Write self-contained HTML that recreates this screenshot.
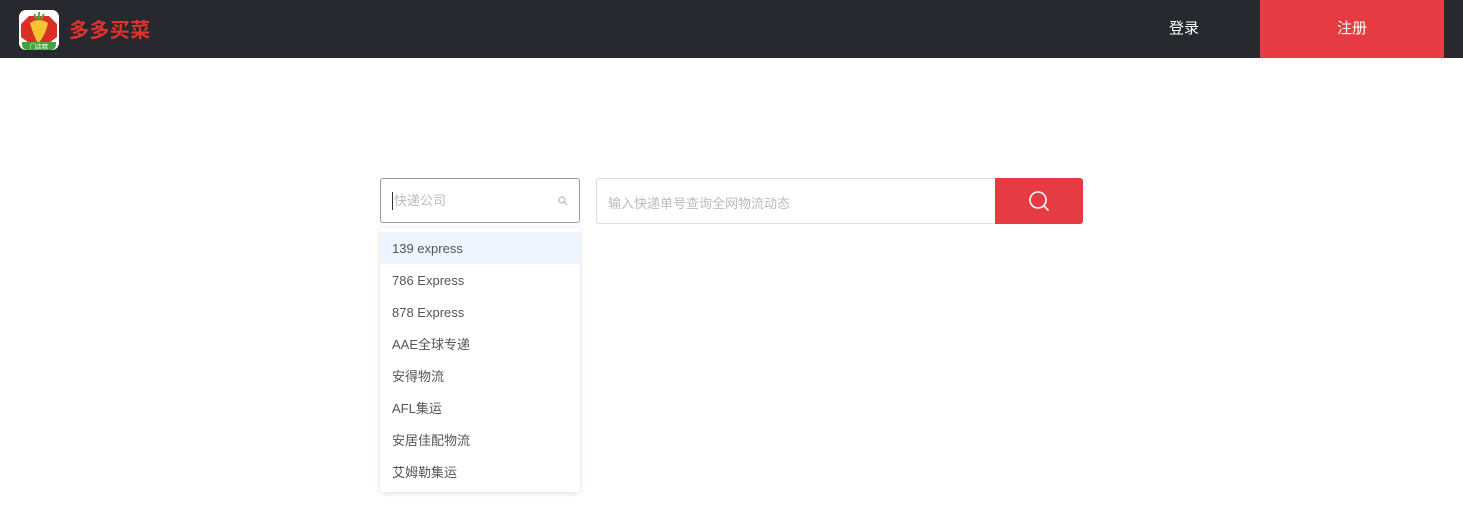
<!DOCTYPE html><html><head><meta charset="utf-8"><style>
*{margin:0;padding:0;box-sizing:border-box}
body{width:1463px;height:510px;background:#fff;font-family:"Liberation Sans","Noto Sans CJK SC",sans-serif;position:relative;overflow:hidden}
.hd{position:absolute;left:0;top:0;width:1463px;height:58px;background:#28292e}
.brand{position:absolute;left:69px;top:14px;color:#e0312f;font-size:20px;font-weight:bold;letter-spacing:0.4px}
.login{position:absolute;left:1150px;top:0;width:68px;height:58px;line-height:58px;text-align:center;color:#fff;font-size:15px}
.reg{position:absolute;left:1260px;top:0;width:184px;height:58px;line-height:58px;text-align:center;color:#fff;font-size:15px;background:#e63b42}
.sel{position:absolute;left:380px;top:178px;width:200px;height:45px;border:1px solid #999;border-radius:3px}
.sel span{position:absolute;left:11px;top:13px;font-size:13px;color:#bbb;border-left:1px solid #333;padding-left:1px;line-height:18px}
.inp{position:absolute;left:596px;top:178px;width:400px;height:46px;border:1px solid #ddd;border-right:none;border-radius:3px 0 0 3px}
.inp span{position:absolute;left:11px;top:14px;font-size:13px;color:#bbb}
.btn{position:absolute;left:995px;top:178px;width:88px;height:46px;background:#e63b42;border-radius:0 3px 3px 0}
.dd{position:absolute;left:380px;top:228px;width:200px;height:264px;background:#fff;box-shadow:0 1px 6px rgba(0,0,0,.15);border-radius:3px;padding-top:4px}
.dd div{height:32px;line-height:33px;padding-left:12px;font-size:13px;color:#555}
.dd div.a{background:#eef5fe}
</style></head><body>
<div class="hd">
<svg style="position:absolute;left:19px;top:10px" width="40" height="40" viewBox="0 0 40 40">
<rect width="40" height="40" rx="7" fill="#fff"/>
<path d="M2 14 L10 6 L30 6 L38 14 L38 27 L30 33 L10 33 L2 27Z" fill="#d93025"/>
<path d="M11 13 Q20 7 29 13 Q27 24 19 34 Q14 24 11 13Z" fill="#f7c431"/>
<path d="M15 4 L18 9 M20 2 L20 9 M25 4 L22 9" stroke="#4caf50" stroke-width="2"/>
<path d="M3 32 L37 32 L37 34 Q37 40 31 40 L9 40 Q3 40 3 34Z" fill="#43a33d"/>
<text x="20" y="39" font-size="6" fill="#fff" text-anchor="middle" font-family="Noto Sans CJK SC">门店精</text>
</svg>
<div class="brand">多多买菜</div>
<div class="login">登录</div>
<div class="reg">注册</div>
</div>
<div class="sel"><span>快递公司</span>
<svg style="position:absolute;left:177px;top:17px" width="10" height="10" viewBox="0 0 10 10"><circle cx="4" cy="4" r="3" fill="none" stroke="#bbb" stroke-width="1.2"/><path d="M6.2 6.2L9 9" stroke="#bbb" stroke-width="1.2"/></svg></div>
<div class="inp"><span>输入快递单号查询全网物流动态</span></div>
<div class="btn"><svg style="position:absolute;left:33px;top:12px" width="22" height="22" viewBox="0 0 22 22"><circle cx="10" cy="10" r="8" fill="none" stroke="#fff" stroke-width="1.6"/><path d="M15.5 15.5L20.5 20.5" stroke="#fff" stroke-width="1.6"/></svg></div>
<div class="dd">
<div class="a">139 express</div><div>786 Express</div><div>878 Express</div><div>AAE全球专递</div><div>安得物流</div><div>AFL集运</div><div>安居佳配物流</div><div>艾姆勒集运</div>
</div>
</body></html>
